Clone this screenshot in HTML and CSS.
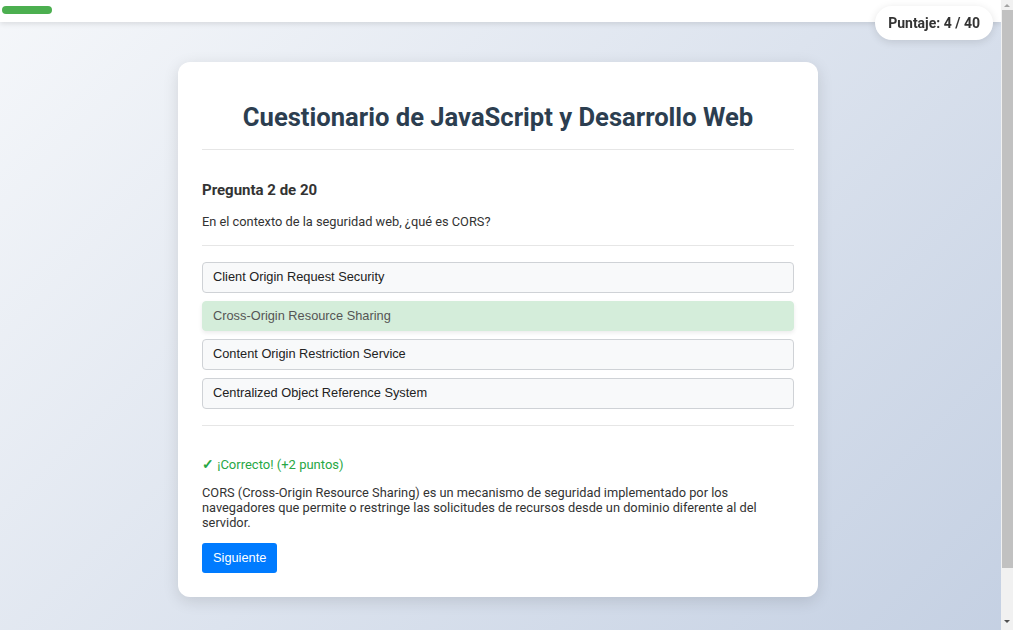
FILE: index.html
```html
<!DOCTYPE html>
<html lang="es">
<head>
<meta charset="utf-8">
<title>Cuestionario de JavaScript y Desarrollo Web</title>
<link rel="stylesheet" href="styles.css">
</head>
<body>
<div class="progress-track"><div class="progress-fill" style="width: 50px"></div></div>
<div class="score">Puntaje: 4 / 40</div>
<div class="scrollbar" aria-hidden="true">
  <span class="arrow up"></span>
  <span class="thumb"></span>
  <span class="arrow down"></span>
</div>
<main class="page">
  <section class="card">
    <h1 class="title">Cuestionario de JavaScript y Desarrollo Web</h1>
    <div class="question">
      <h2 class="q-number">Pregunta 2 de 20</h2>
      <p class="q-text">En el contexto de la seguridad web, ¿qué es CORS?</p>
    </div>
    <div class="options">
      <button class="option" disabled>Client Origin Request Security</button>
      <button class="option correct" disabled>Cross-Origin Resource Sharing</button>
      <button class="option" disabled>Content Origin Restriction Service</button>
      <button class="option" disabled>Centralized Object Reference System</button>
    </div>
    <div class="feedback">
      <p class="result"><span class="check">✓</span> ¡Correcto! (+2 puntos)</p>
      <p class="explanation">CORS (Cross-Origin Resource Sharing) es un mecanismo de seguridad implementado por los navegadores que permite o restringe las solicitudes de recursos desde un dominio diferente al del servidor.</p>
      <button class="next">Siguiente</button>
    </div>
  </section>
</main>
</body>
</html>
```
FILE: styles.css
```css
* { box-sizing: border-box; }
html, body { margin: 0; padding: 0; }
body {
  font-family: Roboto, "Liberation Sans", Arial, sans-serif;
  color: #333;
  background: linear-gradient(135deg, #f5f7fa 0%, #c3cfe2 100%);
  min-height: 680px;
}
.progress-track {
  position: fixed;
  top: 0; left: 0; right: 12px;
  height: 22px;
  background: #fff;
  box-shadow: 0 2px 5px rgba(0,0,0,0.1);
  padding: 6px 2px 0;
  z-index: 5;
}
.progress-fill {
  height: 8px;
  background: #4caf50;
  border-radius: 4px;
}
.score {
  position: fixed;
  top: 6px; right: 20px;
  height: 34px;
  padding: 0 13px;
  display: flex; align-items: center;
  background: #fff;
  border-radius: 17px;
  box-shadow: 0 2px 8px rgba(0,0,0,0.12);
  font-weight: 700;
  font-size: 14px;
  color: #333;
  z-index: 6;
}
.scrollbar {
  position: fixed;
  top: 0; right: 0; bottom: 0;
  width: 12px;
  background: #f1f1f1;
  display: flex;
  flex-direction: column;
  align-items: flex-end;
  z-index: 7;
}
.scrollbar .thumb {
  display: block;
  width: 11px;
  margin-top: 3px;
  height: 558px;
  background: #c1c1c1;
}
.scrollbar .arrow {
  display: block;
  align-self: center;
  width: 0; height: 0;
  border-left: 3px solid transparent;
  border-right: 3px solid transparent;
}
.scrollbar .arrow.up {
  margin-top: 4px;
  border-bottom: 3px solid #a3a3a3;
}
.scrollbar .arrow.down {
  margin-top: auto;
  margin-bottom: 7px;
  border-top: 3px solid #505050;
}
.page {
  display: flex;
  justify-content: center;
  padding: 62px 17px 83px 0;
}
.card {
  width: 640px;
  background: #fff;
  border-radius: 12px;
  box-shadow: 0 4px 16px rgba(0,0,0,0.12);
  padding: 24px;
}
.title {
  margin: 15px 0 0;
  padding-bottom: 16px;
  border-bottom: 1px solid #e6e6e6;
  text-align: center;
  font-size: 25.6px;
  line-height: 32px;
  font-weight: 700;
  color: #2c3e50;
}
.question {
  padding: 31px 0 15px;
  border-bottom: 1px solid #e6e6e6;
}
.q-number {
  margin: 0;
  font-size: 15px;
  line-height: 18px;
  font-weight: 700;
  color: #333;
}
.q-text {
  margin: 15px 0 0;
  font-size: 12.8px;
  line-height: 16px;
  color: #333;
}
.options {
  display: flex;
  flex-direction: column;
  gap: 8px;
  padding: 16px 0 16px;
  border-bottom: 1px solid #e6e6e6;
}
.option {
  display: block;
  width: 100%;
  text-align: left;
  font-family: "Liberation Sans", Arial, sans-serif;
  font-size: 12.8px;
  line-height: 16.67px;
  padding: 6px 10px;
  border: 1px solid #cfd2d6;
  border-radius: 4px;
  background: #f8f9fa;
  color: #222;
}
.option.correct {
  background: #d4edda;
  border-color: #d4edda;
  color: #555;
  box-shadow: 0 2px 4px rgba(0,0,0,0.08);
}
.feedback {
  padding-top: 30px;
}
.result {
  margin: 0;
  font-size: 13px;
  line-height: 16px;
  color: #28a745;
}
.check {
  font-size: 14px;
  font-weight: 700;
}
.explanation {
  margin: 12px 0 0;
  font-size: 12.8px;
  line-height: 15px;
  color: #333;
}
.next {
  margin-top: 13px;
  display: block;
  height: 30px;
  padding: 0 11px;
  font-family: "Liberation Sans", Arial, sans-serif;
  font-size: 12.8px;
  color: #fff;
  background: #007bff;
  border: none;
  border-radius: 3px;
}
```
